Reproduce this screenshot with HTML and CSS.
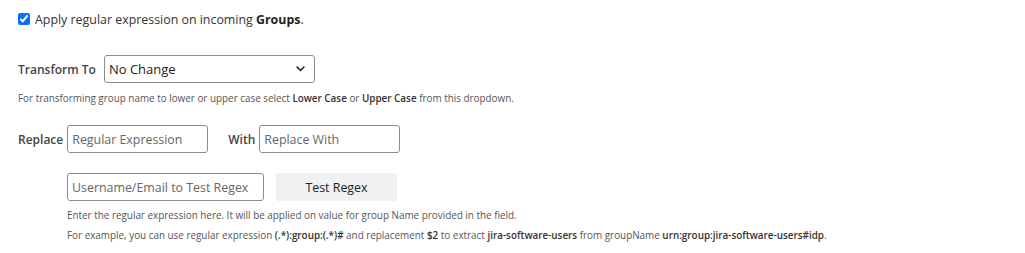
FILE: index.html
```html
<!DOCTYPE html>
<html>
<head>
<meta charset="utf-8">
<link rel="stylesheet" href="styles.css">
</head>
<body>
<div class="page">
  <label class="check-row">
    <input type="checkbox" class="check" checked>
    <span>Apply regular expression on incoming <b>Groups</b>.</span>
  </label>

  <div class="transform-row">
    <span class="label">Transform To</span>
    <div class="select">
      <span>No Change</span>
      <svg class="chev" width="9" height="6" viewBox="0 0 9 6"><path d="M1.2 1.2 L4.5 4.5 L7.8 1.2" fill="none" stroke="#333" stroke-width="1.7" stroke-linecap="round" stroke-linejoin="round"/></svg>
    </div>
  </div>
  <p class="help">For transforming group name to lower or upper case select <b>Lower Case</b> or <b>Upper Case</b> from this dropdown.</p>

  <div class="replace-row">
    <span class="label">Replace</span>
    <div class="input w140">Regular Expression</div>
    <span class="label with">With</span>
    <div class="input w140">Replace With</div>
  </div>

  <div class="indent">
    <div class="test-row">
      <div class="input w196">Username/Email to Test Regex</div>
      <div class="btn">Test Regex</div>
    </div>
    <p class="help small first">Enter the regular expression here. It will be applied on value for group Name provided in the field.</p>
    <p class="help small">For example, you can use regular expression <b>(.*):group:(.*)#</b> and replacement <b>$2</b> to extract <b>jira-software-users</b> from groupName <b>urn:group:jira-software-users#idp</b>.</p>
  </div>
</div>
</body>
</html>
```
FILE: styles.css
```css
* { box-sizing: border-box; }
body {
  margin: 0;
  background: #fff;
  font-family: "Open Sans", "Noto Sans", sans-serif;
  color: #333;
}
.page {
  padding: 9px 18px 0 18px;
}
.check-row {
  display: flex;
  align-items: center;
  gap: 5px;
  font-size: 12.4px;
  color: #333;
  height: 20px;
}
.check {
  margin: 0;
  width: 12px;
  height: 12px;
  accent-color: #0d6efd;
}
.check-row b { font-weight: 700; color: #222; }
.transform-row {
  display: flex;
  align-items: center;
  gap: 8px;
  margin-top: 26px;
}
.label {
  font-size: 12px;
  font-weight: 600;
  color: #444;
}
.select {
  width: 211px;
  height: 28px;
  border: 1px solid #8c8c8c;
  border-radius: 3px;
  display: flex;
  align-items: center;
  justify-content: space-between;
  padding: 0 9px 0 4px;
  font-size: 13px;
  color: #222;
}
.help {
  margin: 8px 0 0 0;
  font-size: 9.9px;
  color: #555;
}
.help b { font-weight: 600; color: #333; }
.replace-row {
  display: flex;
  align-items: center;
  margin-top: 20px;
}
.replace-row .label { margin-right: 4px; }
.replace-row .with { margin-left: 20px; }
.input {
  height: 28px;
  border: 1px solid #8c8c8c;
  border-radius: 3px;
  display: flex;
  align-items: center;
  padding: 0 4px;
  font-size: 12.4px;
  color: #666;
}
.w140 { width: 141px; }
.w196 { width: 197px; }
.indent { padding-left: 49px; }
.test-row {
  display: flex;
  align-items: center;
  gap: 12px;
  margin-top: 20px;
}
.btn {
  width: 121px;
  height: 28px;
  background: #f0f1f2;
  border-radius: 2px;
  display: flex;
  align-items: center;
  justify-content: center;
  font-size: 12.4px;
  color: #222;
}
.help.small { font-size: 9.9px; margin-top: 0; line-height: 20px; }
.help.small.first { margin-top: 4px; }
```
